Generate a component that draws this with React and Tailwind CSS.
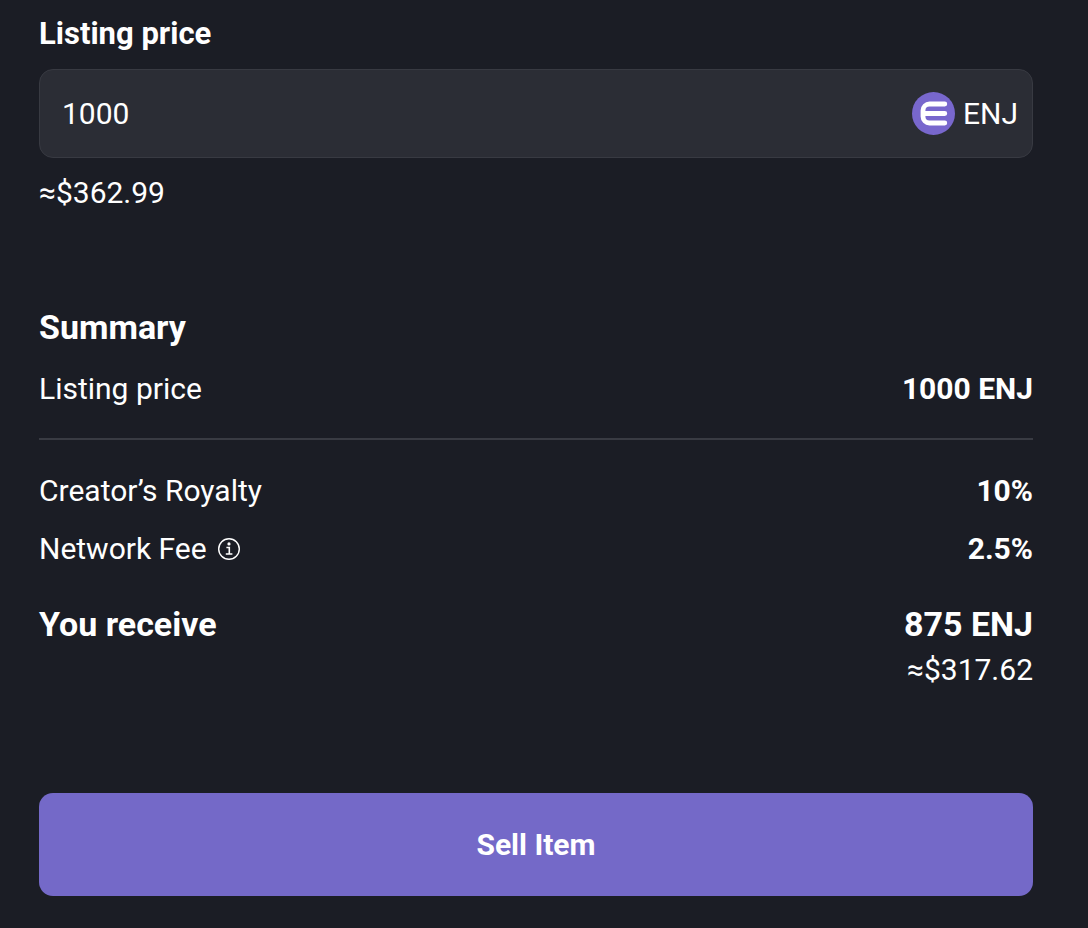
import React, { useState } from "react";

const EnjinLogo = () => (
  <svg className="size-[43px] shrink-0" viewBox="0 0 43 43" fill="none" aria-hidden="true">
    <circle cx="21.5" cy="21.5" r="21.5" fill="#7867cd" />
    <path
      d="M32.8 12H17.5a6.5 6.5 0 0 0-6.5 6.5v6a6.5 6.5 0 0 0 6.5 6.5H32.8M11 21.5H32.8"
      stroke="#fff"
      strokeWidth="4.8"
      strokeLinecap="round"
      strokeLinejoin="round"
    />
  </svg>
);

const InfoIcon = () => (
  <svg className="size-6" viewBox="0 0 24 24" fill="none" stroke="#fff" aria-hidden="true">
    <circle cx="12" cy="12" r="10.3" strokeWidth="1.4" />
    <circle cx="12" cy="6.9" r="1.6" fill="#fff" stroke="none" />
    <path d="M9.4 10.5h2.9v6.3M8.8 17h6.6" strokeWidth="1.6" />
  </svg>
);

const SummaryRow = ({ label, value, info }) => (
  <div className="flex items-center justify-between">
    <dt className="flex items-center gap-[10px]">
      {label}
      {info && (
        <button type="button" aria-label={info}>
          <InfoIcon />
        </button>
      )}
    </dt>
    <dd className="font-bold">{value}</dd>
  </div>
);

const SellItem = () => {
  const [price, setPrice] = useState("1000");

  return (
    <form
      onSubmit={(e) => e.preventDefault()}
      className="min-h-screen bg-[#1b1d25] pt-[14px] pr-[55px] pb-8 pl-[39px] font-['Roboto',sans-serif] text-[30px] leading-10 text-white"
    >
      <label htmlFor="price" className="block text-[31px] leading-10 font-bold">Listing price</label>
      <div className="mt-[15px] flex items-center rounded-[14px] border border-[#383a42] bg-[#2b2d35] py-[22px] pr-[14px] pl-[22px]">
        <input
          id="price"
          type="text"
          inputMode="decimal"
          value={price}
          onChange={(e) => setPrice(e.target.value)}
          className="min-w-0 flex-1 bg-transparent outline-none"
        />
        <EnjinLogo />
        <span className="ml-2">ENJ</span>
      </div>
      <p className="mt-[15px]">≈$362.99</p>

      <h2 className="mt-[94px] text-[34px] leading-10 font-bold">Summary</h2>
      <dl className="mt-[22px]">
        <SummaryRow label="Listing price" value="1000 ENJ" />
      </dl>
      <hr className="mt-[29px] border-t-2 border-[#393b43]" />
      <dl className="mt-[31px] space-y-[18px]">
        <SummaryRow label="Creator’s Royalty" value="10%" />
        <SummaryRow label="Network Fee" value="2.5%" info="About the network fee" />
      </dl>

      <div className="mt-[35px] flex items-start justify-between">
        <h2 className="text-[34px] leading-10 font-bold">You receive</h2>
        <div className="text-right">
          <p className="text-[34px] leading-10 font-bold">875 ENJ</p>
          <p className="mt-[6px]">≈$317.62</p>
        </div>
      </div>

      <button type="submit" className="mt-[103px] h-[103px] w-full rounded-[14px] bg-[#7469c8] font-bold">
        Sell Item
      </button>
    </form>
  );
};

export default SellItem;
